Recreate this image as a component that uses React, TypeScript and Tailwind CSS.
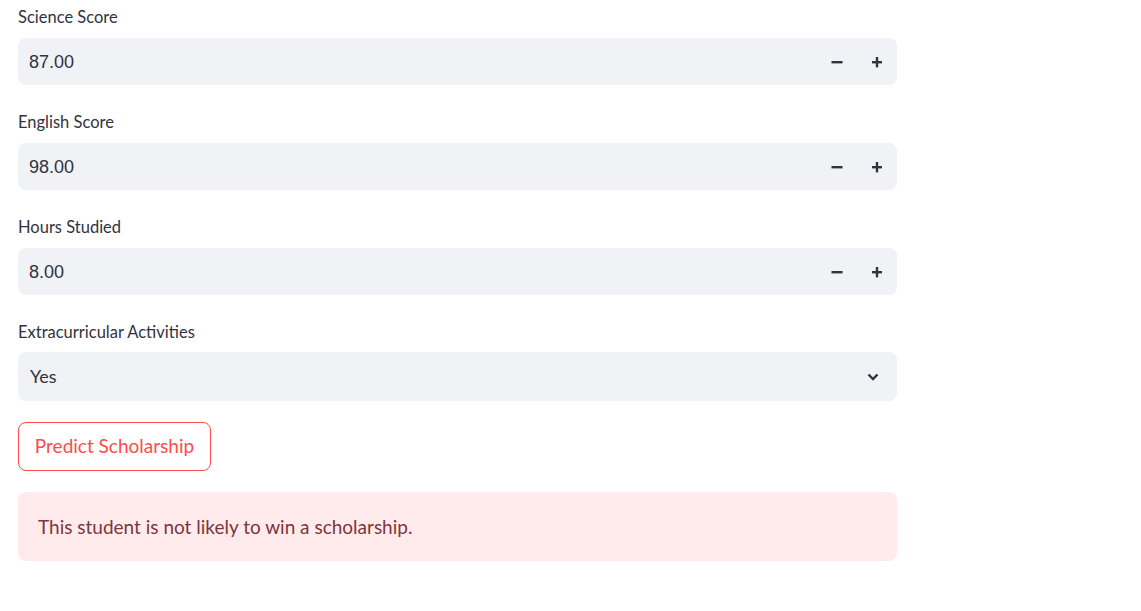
import React from 'react';

const labelFont = { fontFamily: 'Lato, "Noto Sans", sans-serif' };

const NumberField: React.FC<{ label: string; value: string; first?: boolean }> = ({ label, value, first }) => (
  <div className={first ? '' : 'mt-[26px]'}>
    <div className="h-[22px] leading-[22px] text-[16.5px] text-[#31333f]">{label}</div>
    <div className="mt-[10px] h-[47px] rounded-[8px] bg-[#f0f2f6] flex items-center pl-[11px]">
      <span className="flex-1 pt-[2px] text-[18px] text-[#31333f] font-['Liberation_Sans',Arial,sans-serif]">{value}</span>
      <button className="w-[40px] h-full flex items-center justify-center">
        <svg width="12" height="12" viewBox="0 0 12 12">
          <rect x="0.5" y="5" width="11" height="2.4" fill="#31333f" />
        </svg>
      </button>
      <button className="w-[40px] h-full flex items-center justify-center">
        <svg width="12" height="12" viewBox="0 0 12 12">
          <rect x="1" y="5" width="10" height="2.4" fill="#31333f" />
          <rect x="4.8" y="1" width="2.4" height="10.4" fill="#31333f" />
        </svg>
      </button>
    </div>
  </div>
);

const App: React.FC = () => {
  return (
    <div className="min-h-[611px] bg-white pt-[6px] pl-[18px]" style={labelFont}>
      <div className="w-[879px]">
        <NumberField label="Science Score" value="87.00" first />
        <NumberField label="English Score" value="98.00" />
        <NumberField label="Hours Studied" value="8.00" />

        {/* Select */}
        <div className="mt-[26px]">
          <div className="h-[22px] leading-[22px] text-[16.5px] text-[#31333f]">Extracurricular Activities</div>
          <div className="mt-[9px] h-[49px] rounded-[8px] bg-[#f0f2f6] flex items-center pl-[12px] pr-[17px]">
            <span className="flex-1 text-[18px] text-[#31333f]">Yes</span>
            <svg width="14" height="14" viewBox="0 0 14 14">
              <path d="M2.5 4.5 L7 9 L11.5 4.5" fill="none" stroke="#31333f" strokeWidth="2.4" />
            </svg>
          </div>
        </div>

        <button className="mt-[21px] h-[49px] w-[193px] rounded-[8px] border border-[#ff4b4b] bg-white text-[#ff4b4b] text-[19px] flex items-center justify-center">
          Predict Scholarship
        </button>

        <div className="mt-[21px] h-[69px] rounded-[8px] bg-[#ffebec] flex items-center pl-[20px] pt-[2px] text-[19px] text-[#7d353b]">
          This student is not likely to win a scholarship.
        </div>
      </div>
    </div>
  );
};

export default App;
